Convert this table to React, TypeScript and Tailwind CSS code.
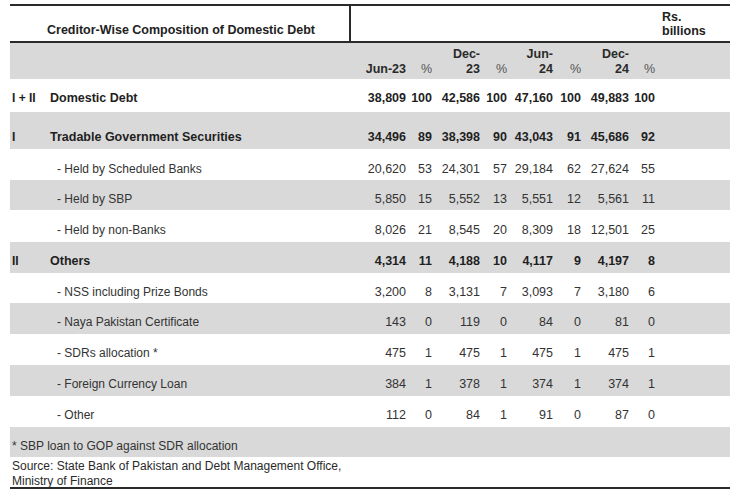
import React from "react";

type Row = {
  num?: string;
  label: string;
  bold?: boolean;
  shade?: boolean;
  sub?: boolean;
  v: string[];
  cls: string;
};

const rows: Row[] = [
  { num: "I + II", label: "Domestic Debt", bold: true, v: ["38,809", "100", "42,586", "100", "47,160", "100", "49,883", "100"], cls: "h-[33px] pb-[6px]" },
  { num: "I", label: "Tradable Government Securities", bold: true, shade: true, v: ["34,496", "89", "38,398", "90", "43,043", "91", "45,686", "92"], cls: "h-[37px] pb-[4px]" },
  { label: "- Held by Scheduled Banks", sub: true, v: ["20,620", "53", "24,301", "57", "29,184", "62", "27,624", "55"], cls: "h-[31px] pb-[3px]" },
  { label: "- Held by SBP", sub: true, shade: true, v: ["5,850", "15", "5,552", "13", "5,551", "12", "5,561", "11"], cls: "h-[30px] pb-[3px]" },
  { label: "- Held by non-Banks", sub: true, v: ["8,026", "21", "8,545", "20", "8,309", "18", "12,501", "25"], cls: "h-[32px] pb-[4px]" },
  { num: "II", label: "Others", bold: true, shade: true, v: ["4,314", "11", "4,188", "10", "4,117", "9", "4,197", "8"], cls: "h-[31px] pb-[4px]" },
  { label: "- NSS including Prize Bonds", sub: true, v: ["3,200", "8", "3,131", "7", "3,093", "7", "3,180", "6"], cls: "h-[30px] pb-[3px]" },
  { label: "- Naya Pakistan Certificate", sub: true, shade: true, v: ["143", "0", "119", "0", "84", "0", "81", "0"], cls: "h-[31px] pb-[4px]" },
  { label: "- SDRs allocation *", sub: true, v: ["475", "1", "475", "1", "475", "1", "475", "1"], cls: "h-[31px] pb-[4px]" },
  { label: "- Foreign Currency Loan", sub: true, shade: true, v: ["384", "1", "378", "1", "374", "1", "374", "1"], cls: "h-[31px] pb-[4px]" },
  { label: "- Other", sub: true, v: ["112", "0", "84", "1", "91", "0", "87", "0"], cls: "h-[31px] pb-[4px]" },
];

const grid =
  "grid grid-cols-[40px_300px_56px_26px_48px_27px_46px_28px_48px_26px_1fr] items-end";

export default function App() {
  return (
    <div
      className="w-[741px] h-[504px] bg-white pt-[4px] text-[#2a2a2a] overflow-hidden"
      style={{ fontFamily: '"Liberation Sans", Arial, sans-serif' }}
    >
      <div className="ml-[10px] w-[720px]">
        {/* Title block */}
        <div className="flex h-[39px] border-t-2 border-b-2 border-[#2a2a2a]">
          <div className="w-[341px] border-r-2 border-[#2a2a2a] flex items-end pb-[3px] pl-[37px]">
            <span className="text-[12.5px] leading-[15px] font-bold text-[#222]">
              Creditor-Wise Composition of Domestic Debt
            </span>
          </div>
          <div className="flex-1 flex items-end pb-[3px] pl-[311px]">
            <span className="text-[12.5px] leading-[14px] font-bold text-[#222]">
              Rs.
              <br />
              billions
            </span>
          </div>
        </div>

        {/* Column header */}
        <div className={`${grid} h-[36px] pb-[2px] bg-[#d9d9d9] text-[12.5px] leading-[15px] font-bold text-[#2a2a2a]`}>
          <div />
          <div />
          <div className="text-right">Jun-23</div>
          <div className="text-right font-normal text-[#555]">%</div>
          <div className="text-right">
            Dec-
            <br />
            23
          </div>
          <div className="text-right font-normal text-[#555]">%</div>
          <div className="text-right">
            Jun-
            <br />
            24
          </div>
          <div className="text-right font-normal text-[#555]">%</div>
          <div className="text-right">
            Dec-
            <br />
            24
          </div>
          <div className="text-right font-normal text-[#555]">%</div>
          <div />
        </div>

        {rows.map((r, i) => (
          <div
            key={i}
            className={`${grid} ${r.cls} leading-[15px] ${r.shade ? "bg-[#d9d9d9]" : "bg-white"} ${
              r.bold ? "font-bold text-[#1f1f1f]" : "text-[#333]"
            }`}
          >
            <div className="pl-[2px] text-[12px]">{r.num ?? ""}</div>
            <div className={`${r.sub ? "pl-[7px] text-[12px]" : "text-[12.5px]"} whitespace-nowrap`}>
              {r.label}
            </div>
            {r.v.map((x, j) => (
              <div key={j} className="text-right text-[12.5px]">
                {x}
              </div>
            ))}
            <div />
          </div>
        ))}

        {/* Footnote */}
        <div className="h-[30px] bg-[#d9d9d9] flex items-end pb-[3px] pl-[2px] text-[12px] leading-[15px] text-[#333]">
          * SBP loan to GOP against SDR allocation
        </div>

        {/* Source */}
        <div className="h-[32px] border-b-2 border-[#2a2a2a] pt-[2px] pl-[2px] text-[12px] leading-[15px] text-[#2a2a2a]">
          Source: State Bank of Pakistan and Debt Management Office,
          <br />
          Ministry of Finance
        </div>
      </div>
    </div>
  );
}
